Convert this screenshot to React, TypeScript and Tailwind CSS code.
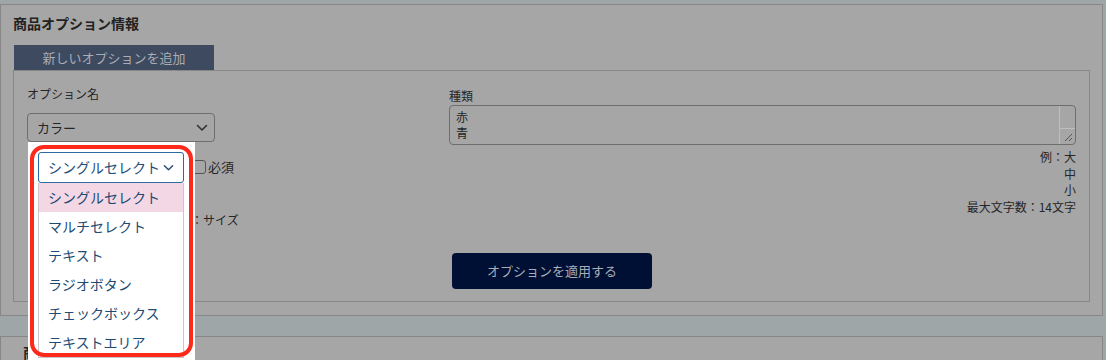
import React from "react";

const Chevron = ({ color, w = 12 }: { color: string; w?: number }) => (
  <svg width={w} height={8} viewBox="0 0 12 8" fill="none">
    <polyline points="1.5,1.5 6,6 10.5,1.5" stroke={color} strokeWidth="1.6" strokeLinecap="round" strokeLinejoin="round" />
  </svg>
);

const options = ["シングルセレクト", "マルチセレクト", "テキスト", "ラジオボタン", "チェックボックス", "テキストエリア"];

export default function App() {
  return (
    <div className="relative w-[1106px] h-[360px] overflow-hidden bg-[#9ea6a7] pt-[4px] font-['Noto_Sans_CJK_JP','Noto_Sans',sans-serif] text-[#262626]">
      {/* Panel 1 */}
      <div className="w-[1103px] h-[312px] border border-[#878787] bg-[#a6a6a6] px-[12px] pt-[8px]">
        <div className="text-[14px] font-bold leading-[20px] text-[#222]">商品オプション情報</div>
        <div className="mt-[12px] ml-[1px] w-[200px] h-[25px] bg-[#3e4a5f] flex items-center justify-center text-[13px] text-[#a9adb5]">
          新しいオプションを追加
        </div>
        <div className="w-[1077px] h-[232px] border border-[#878787] pl-[13px] pt-[14px]">
          <div className="flex">
            <div className="w-[422px]">
              <div className="text-[12px] leading-[18px]">オプション名</div>
              <div className="mt-[10px] h-[29px] w-[188px] rounded-[4px] border border-[#6e6e6e] flex items-center justify-between pl-[9px] pr-[6px] text-[13px]">
                <span>カラー</span>
                <Chevron color="#333" />
              </div>
              <div className="mt-[10px] h-[30px] flex items-center">
                <div className="w-[165px]" />
                <div className="w-[14px] h-[14px] rounded-[3px] border border-[#555]" />
                <span className="ml-[2px] text-[13px]">必須</span>
              </div>
              <div className="mt-[29px] pl-[152px] text-[12px] leading-[18px]">例：サイズ</div>
            </div>
            <div className="w-[627px]">
              <div className="pt-[2px] text-[12px] leading-[18px]">種類</div>
              <div className="relative h-[40px] w-[627px] rounded-[4px] border border-[#6e6e6e] pl-[6px] pt-[3px] text-[12px] leading-[16px]">
                <div>赤</div>
                <div>青</div>
                <div className="absolute right-0 top-0 h-full w-[16px] border-l border-[#bdbdbd]">
                  <div className="h-[23px] border-b border-[#bdbdbd]" />
                  <svg className="absolute right-[2px] bottom-[2px]" width="9" height="9" viewBox="0 0 9 9">
                    <line x1="1" y1="8" x2="8" y2="1" stroke="#555" strokeWidth="1" />
                    <line x1="5" y1="8" x2="8" y2="5" stroke="#555" strokeWidth="1" />
                  </svg>
                </div>
              </div>
              <div className="mt-[4px] text-right text-[12px] leading-[16.5px] text-[#262626]">
                <div>例：大</div>
                <div>中</div>
                <div>小</div>
                <div>最大文字数：14文字</div>
              </div>
            </div>
          </div>
          <div className="mt-[24px] ml-[425px] w-[200px] h-[36px] rounded-[4px] bg-[#001035] flex items-center justify-center text-[13px] text-[#a9adb7]">
            オプションを適用する
          </div>
        </div>
      </div>

      {/* Panel 2 */}
      <div className="mt-[20px] w-[1103px] h-[40px] border border-[#878787] bg-[#a6a6a6] pl-[22px] pt-[5px]">
        <div className="text-[14px] font-bold leading-[20px] text-[#222]">商品情報</div>
      </div>

      {/* Open select popup */}
      <div className="absolute left-[28px] top-[142px] w-[167px] h-[218px] bg-white">
        <div className="absolute left-[10px] top-[10px] w-[146px] h-[31px] rounded-[3px] border-[1.5px] border-[#2c6aa3] flex items-center justify-between pl-[9px] pr-[9px] text-[14px] text-[#1f4d78]">
          <span>シングルセレクト</span>
          <Chevron color="#2a4f74" w={11} />
        </div>
        <div className="absolute left-[10px] top-[41px] w-[146px] border-x border-b border-[#c8c8c8]">
          {options.map((o, i) => (
            <div
              key={o}
              className={`h-[29px] flex items-center pl-[9px] text-[14px] text-[#214a72] ${i === 0 ? "bg-[#f4d7e5]" : "bg-white"}`}
            >
              {o}
            </div>
          ))}
        </div>
      </div>
      <div className="absolute left-[30px] top-[145px] w-[163px] h-[212px] border-[4px] border-[#fb2a1a] rounded-[14px]" />
    </div>
  );
}
